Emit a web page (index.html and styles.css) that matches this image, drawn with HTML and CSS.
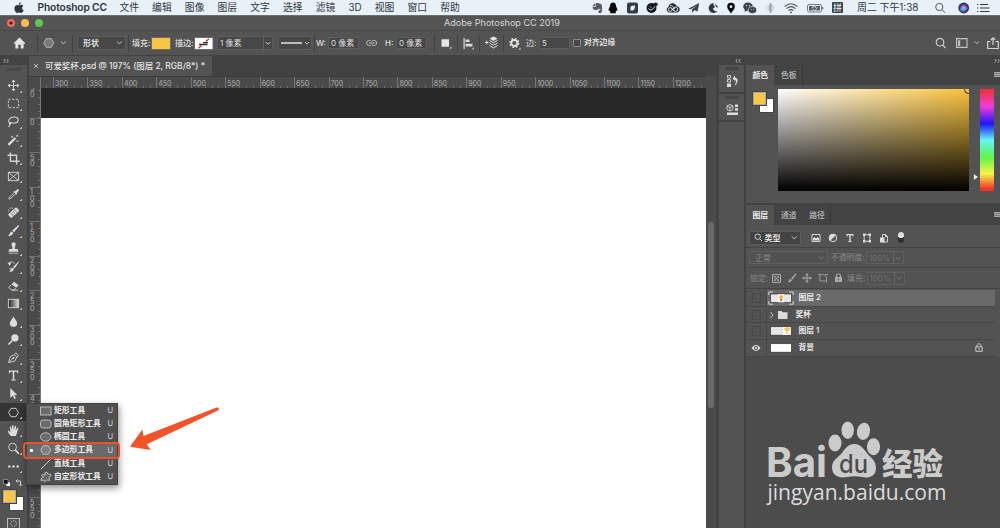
FILE: index.html
```html
<!DOCTYPE html>
<html lang="zh-CN">
<head>
<meta charset="utf-8">
<title>Adobe Photoshop CC 2019</title>
<link rel="stylesheet" href="styles.css">
</head>
<body>
<div class="screen">
  <header class="menubar">
    <nav class="menus">
      <svg class="apple" width="10" height="12" viewBox="0 0 10 12"><path d="M6.9 0.3C6.9 1.6 5.9 2.7 4.8 2.7C4.7 1.5 5.8 0.5 6.9 0.3ZM5 3.3C5.600 3.300 6.200 2.800 7.100 2.800C8 2.800 8.800 3.300 9.200 3.900C7.500 5 7.800 7.500 9.600 8.200C9.200 9.300 8.300 11 7.200 11C6.400 11 6.100 10.500 5.200 10.500C4.300 10.500 3.900 11 3.200 11C1.800 11 0.400 8.600 0.400 6.500C0.400 4.300 1.700 3 3.100 3C3.900 3 4.400 3.300 5 3.300Z"/></svg>
      <b class="appname">Photoshop CC</b>
      <span>文件</span><span>编辑</span><span>图像</span><span>图层</span><span>文字</span><span>选择</span><span>滤镜</span><span>3D</span><span>视图</span><span>窗口</span><span>帮助</span>
    </nav>
    <div class="status">
      <svg width="11" height="12" viewBox="0 0 11 12"><path fill="#555b62" d="M0.400 4L3 1.200V4ZM3.700 1H6.500L7.200 1.700L9.300 2.100C10.400 4.500 10.300 8.500 9.600 10.200C8.800 11.600 6.300 11.400 6.300 9.700C6.300 8.500 7.300 8.200 8.300 8.300V7.300C6.900 7.200 6.500 6.600 6.200 6.800C5.800 8.200 5 8 3.500 8C1.200 8 0.700 6.500 0.500 4.700H3.700Z"/></svg>
      <svg width="11" height="12" viewBox="0 0 11 12"><path fill="#0a0a0a" d="M5 0.500C7 0.500 8 2 8 4.500C9 6 9.600 7.500 9.300 8.800C8.900 9.200 8.500 8.500 8.300 8.200C8.200 9 8 9.500 7.500 10C8.500 10.600 8 11.300 6.800 11.300H3.200C2 11.300 1.500 10.600 2.500 10C2 9.500 1.800 9 1.700 8.200C1.500 8.500 1.100 9.200 0.700 8.800C0.400 7.500 1 6 2 4.500C2 2 3 0.500 5 0.500Z"/></svg>
      <svg width="11" height="12" viewBox="0 0 11 12"><rect y="0.500" width="11" height="11" rx="2" fill="#343b43"/><path fill="#e7eff8" d="M3.500 8.500V5.500C3.500 4 5 3.300 8 3.500C8 7 7 8.500 5.500 8.500Z"/></svg>
      <svg width="12" height="12" viewBox="0 0 12 12"><circle cx="5.500" cy="6" r="5" fill="#15191d"/><circle cx="9.700" cy="2.300" r="1.900" fill="#15191d"/><path stroke="#e7eff8" fill="none" d="M2.500 6.500C4 9 7 8 8.800 4.500M4 4.500L5 5.500"/></svg>
      <svg width="14" height="12" viewBox="0 0 14 12"><path fill="#252b31" d="M4 10.500C0.500 10.500-0.500 6 2.500 5C3 0.500 9 0 10.500 4C15 4.500 14.500 10.500 10.500 10.500Z"/><g fill="none" stroke="#e7eff8" stroke-width="0.900"><circle cx="4.300" cy="7.500" r="1.900"/><circle cx="9.500" cy="7.200" r="2.200"/><path d="M4 3.700C6 3 7.500 5 9 7M5.500 6L8 9"/></g></svg>
      <svg width="12" height="12" viewBox="0 0 12 12"><path fill="#3a4148" d="M0.200 6.800L11.200 1L9.500 9.500L6.300 8L4.500 11L3.900 7.400L9 3.200L2.800 7.300Z"/></svg>
      <svg width="11" height="12" viewBox="0 0 11 12"><path fill="#30363d" d="M5.500 1A5 5 0 1 0 9.500 9.300C7.500 9.500 5.500 8.500 5 6.700L7 5L5.700 3Z"/><path fill="#30363d" d="M7 1.500L10.500 5.500L8 5Z"/></svg>
      <svg width="9" height="12" viewBox="0 0 9 12"><path fill="#080808" fill-rule="evenodd" d="M4 0.800A3.800 3.800 0 0 1 7.800 4.700C7.800 7 5.500 9 4 11.500C2.500 9 0.200 7 0.200 4.700A3.800 3.800 0 0 1 4 0.800ZM4 3.300A1.400 1.400 0 1 0 4 6.100A1.400 1.400 0 0 0 4 3.300Z"/></svg>
      <svg width="14" height="12" viewBox="0 0 14 12"><g fill="#3b424a"><ellipse cx="5" cy="4.600" rx="4.800" ry="4"/><path d="M2 7L1.500 10L4.500 8.300Z"/><ellipse cx="9.400" cy="8" rx="4.200" ry="3.400" stroke="#e7eff8" stroke-width="0.600"/></g><g fill="#e7eff8"><circle cx="3.500" cy="3.700" r="0.600"/><circle cx="6.500" cy="3.700" r="0.600"/><circle cx="8.200" cy="7.200" r="0.500"/><circle cx="10.700" cy="7.200" r="0.500"/></g></svg>
      <svg width="9" height="12" viewBox="0 0 9 12"><path stroke="#7d858e" stroke-width="0.900" fill="none" d="M2 3.500L6.200 8L4.200 10.500V1.500L6.200 4L2 8.500M0 6H1.200M6.800 6H8"/></svg>
      <svg width="14" height="12" viewBox="0 0 14 12"><g fill="none" stroke="#4a5159" stroke-width="1.100"><path d="M0.600 4.600Q7-1.200 13.400 4.600M2.600 6.700Q7 2.600 11.400 6.700M4.600 8.700Q7 6.500 9.400 8.700"/></g><circle cx="7" cy="10.400" r="0.900" fill="#4a5159"/></svg>
      <svg width="17" height="12" viewBox="0 0 17 12"><rect x="0.500" y="2.500" width="14" height="7.500" rx="1.500" fill="none" stroke="#737a82"/><path fill="#525960" d="M2 4H6L4.500 7H6V8.500H2ZM9 4H13V8.500H8.500L11 5.500H9ZM15.200 5H16.200V7.500H15.200ZM8.700 3L4.800 6.900H7L6.300 9.700L10.200 5.700H8Z"/></svg>
      <span class="ime">拼</span>
      <span class="clock">周二 下午1:38</span>
      <svg width="11" height="12" viewBox="0 0 11 12"><g fill="none" stroke="#555c64"><circle cx="4.300" cy="5" r="3.600"/><path d="M7 7.700L10 10.800"/></g></svg>
      <svg width="12" height="12" viewBox="0 0 12 12"><defs><radialGradient id="siri"><stop offset="0" stop-color="#f4f4ff"/><stop offset=".25" stop-color="#8fa2ff"/><stop offset=".55" stop-color="#7b3b9d"/><stop offset="1" stop-color="#20273e"/></radialGradient></defs><circle cx="5.700" cy="6" r="5.400" fill="url(#siri)"/><path d="M1.500 7Q6 4 10 6Q7 8 5 10Q2.500 9.500 1.500 7Z" fill="#35b9df" opacity=".65"/></svg>
      <svg width="13" height="12" viewBox="0 0 13 12"><path stroke="#30373e" stroke-width="1.200" d="M0 2.500H1.200M0 6H1.200M0 9.500H1.200M3 2.500H11M3 6H12.500M3 9.500H12.500"/></svg>
    </div>
  </header>

  <div class="titlebar"><i class="light red"></i><i class="light yellow"></i><i class="light green"></i><span class="title">Adobe Photoshop CC 2019</span></div>

  <div class="options">
    <svg width="13" height="12" viewBox="0 0 13 12"><path fill="#e4e4e4" d="M6.500 0.500L0.700 6.200L1.500 7L2.400 6.500V11.500H5.300V7.700H7.700V11.500H10.600V6.500L11.500 7L12.300 6.200Z"/></svg>
    <i class="rule"></i>
    <svg width="12" height="12" viewBox="0 0 12 12"><path fill="#777" stroke="#b5b5b5" d="M3.300 1.700H8.300L10.700 6L8.300 10.300H3.300L0.800 6Z"/></svg>
    <svg width="7" height="6" viewBox="0 0 7 6"><path class="chev" d="M1 1.500L3.300 4L5.600 1.500"/></svg>
    <i class="rule"></i>
    <div class="field shape"><span>形状</span><svg width="7" height="6" viewBox="0 0 7 6"><path class="chev" d="M1 1.500L3.300 4L5.600 1.500"/></svg></div>
    <i class="rule"></i>
    <span>填充:</span>
    <i class="fillbox"></i>
    <span>描边:</span>
    <svg width="20" height="13" viewBox="0 0 20 13"><rect x="0.500" y="0.500" width="18.500" height="12" fill="#fff" stroke="#6c6c6c"/><path stroke="#e12222" stroke-width="1.300" d="M4.500 11.200L7.500 8.500M12 4.500L15 1.700"/><path stroke="#333" stroke-width="1.300" d="M5 7.500H13.500M9 5.700H14"/></svg>
    <div class="field split"><span>1 像素</span><svg width="9" height="12" viewBox="0 0 9 12"><path stroke="#606060" d="M0.500 0V12"/><path class="chev" d="M3 5L5.200 7.400L7.400 5"/></svg></div>
    <div class="field line"><svg width="30" height="12" viewBox="0 0 30 12"><path stroke="#f0f0f0" stroke-width="1.400" d="M1 6H22"/><path class="chev" d="M25 5L27 7.200L29 5"/></svg></div>
    <i class="rule"></i>
    <span>W:</span>
    <div class="field num">0 像素</div>
    <svg width="12" height="8" viewBox="0 0 12 8"><g fill="none" stroke="#c4c4c4"><path d="M5.300 2.200C4.500 1 0.700 1 0.700 4S4.500 7 5.300 5.800M6 2.200C7 1 10.500 1 10.500 4S7 7 6 5.800M3 4H8.500"/></g></svg>
    <span>H:</span>
    <div class="field num">0 像素</div>
    <i class="rule"></i>
    <svg width="12" height="12" viewBox="0 0 12 12"><path fill="#e5e5e5" d="M0.500 2.200H8V9.700H0.500ZM8.500 11.500H10.500V9.500Z"/></svg>
    <i class="rule"></i>
    <svg width="12" height="13" viewBox="0 0 12 13"><path fill="#d8d8d8" d="M0.500 1H1.700V12H0.500ZM2.500 2.500H6.500V5H2.500ZM2.500 6.700H9.500V9.500H2.500ZM8.800 12.300H10.800V10.300Z"/></svg>
    <i class="rule"></i>
    <svg width="14" height="14" viewBox="0 0 14 14"><path fill="#e2e2e2" d="M8.500 0.500L12.500 2.500L8.500 5L4.500 2.500ZM0 6H3.500V7H0ZM1.300 4.700H2.300V8.300H1.300Z"/><path fill="none" stroke="#ddd" d="M4.500 4.500L8.500 6.700L12.500 4.500M4.500 7L8.500 9.200L12.500 7M4.500 9.500L8.500 12L12.500 9.500"/></svg>
    <i class="rule"></i>
    <svg width="13" height="13" viewBox="0 0 13 13"><circle cx="5.300" cy="6" r="3" fill="none" stroke="#e0e0e0" stroke-width="1.800"/><circle cx="5.300" cy="6" r="4.300" fill="none" stroke="#e0e0e0" stroke-width="1.600" stroke-dasharray="1.700 1.680"/><path fill="#ddd" d="M9.500 12.500H11.500V10.500Z"/></svg>
    <span class="soft">边:</span>
    <div class="field num">5</div>
    <i class="check"></i>
    <span class="strong">对齐边缘</span>
    <svg width="12" height="12" viewBox="0 0 12 12"><g fill="none" stroke="#ccc" stroke-width="1.200"><circle cx="5" cy="5.200" r="3.800"/><path d="M7.700 8L10.500 11"/></g></svg>
    <svg width="13" height="12" viewBox="0 0 13 12"><path fill="none" stroke="#c4c4c4" stroke-width="1.100" d="M0.600 1.600H11V10.400H0.600Z"/><path fill="#bbb" d="M2 3.200H4.200V9H2Z"/></svg>
    <svg width="7" height="6" viewBox="0 0 7 6"><path class="chev" d="M0.800 1.500L2.800 3.700L4.800 1.500"/></svg>
    <svg width="13" height="13" viewBox="0 0 13 13"><path fill="none" stroke="#d0d0d0" stroke-width="1.200" d="M3.500 4.500H0.700V11.500H11.300V4.500H8.500M6 8V1M3.700 3L6 0.900L8.300 3"/></svg>
  </div>

  <div class="work">
    <aside class="tools">
      <div class="strip">››</div>
      <div class="grip"></div>
      <div class="tool"><svg viewBox="0 0 14 14"><path class="s" d="M7 2V12M2 7H12"/><path class="f" d="M7 0.700L9.200 3.200H4.800ZM7 13.300L9.200 10.800H4.800ZM0.700 7L3.200 4.800V9.200ZM13.300 7L10.800 4.800V9.200Z"/></svg></div>
      <div class="tool"><svg viewBox="0 0 14 14"><rect class="s" x="1.500" y="2.500" width="11" height="9" stroke-dasharray="2.500 1.500"/></svg></div>
      <div class="tool"><svg viewBox="0 0 14 14"><path class="s" stroke-width="1.200" d="M3 8.300C0 6.500 3 2.200 7.500 2.200C14 2.200 13.500 8.500 7.500 8.700C5.500 8.700 4 7.500 3 8.300C1.500 9.500 3.500 10.500 4 9.500C4.500 8.300 3 8 3 10.500C3 12 2 12.500 1.500 12.800"/></svg></div>
      <div class="tool"><svg viewBox="0 0 14 14"><path stroke="#ddd" stroke-width="2.400" d="M1.500 12.800L9 5.300"/><path class="s" d="M4.500 3L6.500 5M6.500 3L4.500 5M10 2L12 4M12 2L10 4M10.500 8L12 9.500M12 8L10.500 9.500"/></svg></div>
      <div class="tool"><svg viewBox="0 0 14 14"><path class="s" stroke-width="1.500" d="M3.700 0.500V10H13.500M0.500 3.500H10.300V13.500"/></svg></div>
      <div class="tool"><svg viewBox="0 0 14 14"><path class="s" d="M1.500 2.500H12.500V11.500H1.500ZM1.500 2.500L12.500 11.500M12.500 2.500L1.500 11.500"/></svg></div>
      <div class="tool"><svg viewBox="0 0 14 14"><path class="s" d="M8 4.500L3 9.700L2 12L4.300 11L9.500 6"/><path class="f" d="M7 4L8 3L9 3.700C9.500 2.500 11.500 0.500 12.500 1.500S11.500 4.500 10.300 5.200L11 6.200L10 7.200Z"/></svg></div>
      <div class="tool"><svg viewBox="0 0 14 14"><g transform="rotate(-42 7 7)"><rect class="f" x="1" y="4.500" width="12" height="5.500" rx="1.500"/><path stroke="#666" stroke-width=".8" d="M4.300 4.500V10M9.700 4.500V10M6 6.200H8M6 8.200H8"/></g><path class="s" stroke-dasharray="1.200 1" d="M1.500 6C1 3.500 4 1 6.500 2.500"/></svg></div>
      <div class="tool"><svg viewBox="0 0 14 14"><path class="f" d="M12.300 1L13.200 1.900L7.700 9L5.500 7.300ZM5 8L7 9.800C5.500 12.700 3 13 1 12.700C3 11.500 3 8.500 5 8Z"/></svg></div>
      <div class="tool"><svg viewBox="0 0 14 14"><path class="f" d="M5 3.500A2.300 2.300 0 1 1 9.200 3.500C8.500 5 8.300 6 8.500 7.500H11.500L12.500 10.500H1.500L2.500 7.500H5.700C6 6 5.700 5 5 3.500ZM2 11.500H12V12.500H2Z"/></svg></div>
      <div class="tool"><svg viewBox="0 0 14 14"><path class="f" d="M12.500 1.500L13 2L8.500 9L6.500 7.500ZM6 8L7.700 9.600C6.500 12.500 4 12.800 2.300 12.500C4 11.500 4 8.500 6 8ZM0.500 3L3 6.500L4.500 3Z"/><path class="s" d="M2 3.500C4 1 7 2 8 4M2.500 9L4.500 10"/></svg></div>
      <div class="tool"><svg viewBox="0 0 14 14"><path class="f" d="M7.500 3L12.500 6.700L10 9.500L5 5.800Z"/><path class="s" d="M4.500 6.200L1.800 9.200L5 11.800H7.500L9.500 9.800M5 12H12"/></svg></div>
      <div class="tool"><svg viewBox="0 0 14 14"><defs><linearGradient id="gr"><stop stop-color="#222"/><stop offset="1" stop-color="#ddd"/></linearGradient></defs><rect x="1.500" y="2.500" width="11" height="9" fill="url(#gr)" stroke="#d0d0d0"/></svg></div>
      <div class="tool"><svg viewBox="0 0 14 14"><path class="f" d="M7 1.500C8.500 4.500 11 6.500 11 9A4 3.800 0 0 1 3 9C3 6.500 5.500 4.500 7 1.500Z"/></svg></div>
      <div class="tool"><svg viewBox="0 0 14 14"><circle class="f" cx="8.500" cy="5.300" r="3.900"/><path stroke="#ddd" stroke-width="1.600" d="M5.500 8.300L1.500 12.500"/></svg></div>
      <div class="tool"><svg viewBox="0 0 14 14"><path class="s" d="M1.800 12.500L3.500 6L8 4L10.500 6.500L8.500 10.800ZM2 12.300L6.500 7.800M8 3.500L9.500 2L12.500 5L11 6.500"/><circle class="f" cx="7" cy="7.500" r="1"/></svg></div>
      <div class="tool"><svg viewBox="0 0 14 14"><path class="f" d="M2 1.500H12V4.500H11L10.500 2.900H7.800V11.300L9.500 11.700V12.500H4.500V11.700L6.200 11.300V2.900H3.500L3 4.500H2Z"/></svg></div>
      <div class="tool"><svg viewBox="0 0 14 14"><path class="f" d="M3.500 1L11 8.500L7.800 8.600L9.700 12L8 12.900L6.200 9.400L3.500 11.500Z"/></svg></div>
      <div class="tool on"><svg viewBox="0 0 14 14"><path class="s" d="M4.300 2.500H9.700L12.300 7L9.700 11.500H4.300L1.700 7Z"/></svg></div>
      <div class="tool"><svg viewBox="0 0 14 14"><path class="f" d="M3.500 12.500L1 8.500C0.500 7.500 1.800 7 2.500 7.800L3.800 9L3 3.500C3 2.500 4.200 2.500 4.500 3.400L5.300 6.500L5.500 1.900C5.600 0.900 6.900 0.900 7 1.900L7.300 6.300L8.500 2.300C8.800 1.400 10 1.700 9.900 2.700L9.300 7L10.700 4.500C11.200 3.800 12.300 4.300 12 5.200L10.500 10.500L9.500 13H4Z"/></svg></div>
      <div class="tool"><svg viewBox="0 0 14 14"><circle class="s" cx="6" cy="5.500" r="4.200"/><path stroke="#ddd" stroke-width="1.800" d="M9 8.700L12.800 12.700"/></svg></div>
      <div class="tool"><svg viewBox="0 0 14 14"><g class="f"><circle cx="2.500" cy="7" r="1.300"/><circle cx="7" cy="7" r="1.300"/><circle cx="11.500" cy="7" r="1.300"/></g></svg></div>
      <div class="minis"><svg width="8" height="8" viewBox="0 0 8 8"><path fill="#fff" stroke="#222" stroke-width=".6" d="M3 3H7.500V7.500H3Z"/><path fill="#111" stroke="#bbb" stroke-width=".6" d="M0.500 0.500H5V5H0.500Z"/></svg><svg width="8" height="8" viewBox="0 0 8 8"><path fill="none" stroke="#d0d0d0" d="M2.500 0.500L1 2L2.500 3.500M1 2H5.500V6.500M4 5.500L5.500 7L7 5.500"/></svg></div>
      <div class="swatches"><i class="bg"></i><i class="fg"></i></div>
      <svg class="mask" width="13" height="10" viewBox="0 0 13 10"><rect x="0.500" y="0.500" width="12" height="10" fill="none" stroke="#bbb"/><circle cx="6.500" cy="5.500" r="2.800" fill="none" stroke="#bbb" stroke-dasharray="1.500 1"/></svg>
    </aside>

    <main class="doc">
      <div class="tabs"><div class="tab"><svg width="6" height="6" viewBox="0 0 6 6"><path stroke="#bbb" d="M1 1L5 5M5 1L1 5"/></svg><span class="filename">可爱奖杯.psd @ 197% (图层 2, RGB/8*) *</span></div></div>
      <div class="hruler"><i class="corner"></i><div class="hticks"><span>300</span><span>350</span><span>400</span><span>450</span><span>500</span><span>550</span><span>600</span><span>650</span><span>700</span><span>750</span><span>800</span><span>850</span><span>900</span><span>950</span><span>1000</span><span>1050</span><span>1100</span><span>1150</span><span>1200</span></div></div>
      <div class="stage">
        <div class="vruler"><div class="vticks"><span>50</span><span>0</span><span>50</span><span>100</span><span>150</span><span>200</span><span>250</span><span>300</span><span>350</span><span>400</span><span>450</span><span>500</span><span>550</span></div></div>
        <div class="canvas"></div>
      </div>
    </main>
    <div class="scroll"><i class="thumb"></i></div>

    <div class="side">
      <div class="strip sidestrip"><span>‹‹</span><span>››</span></div>
      <div class="sidebody">
        <div class="dock">
          <div class="dockitem"><svg width="13" height="14" viewBox="0 0 13 14"><path fill="none" stroke="#ccc" d="M1.500 1.500H4.500V4H1.500ZM1.500 5.500H4.500V8H1.500Z"/><path fill="#ddd" d="M1 9.500H5V13H1ZM6.500 4.500L9 1.500V3.500C12.500 4 12.500 9 8.500 12C10 9 10.500 6.500 9 5.800V7Z"/></svg></div>
          <div class="dockitem"><svg width="13" height="14" viewBox="0 0 13 14"><path fill="none" stroke="#ccc" d="M4 1.500L7 3V6.500L4 8L1 6.500V3ZM1 3L4 4.500L7 3M4 4.500V8"/><path fill="#ddd" d="M9 1.500H12V4H9ZM9 5.200H12V7.800H9ZM1 9.500H12V12H1Z"/></svg></div>
        </div>
        <div class="panels">
          <div class="ptabs colortabs"><b class="active">颜色</b><b>色板</b><i class="pmenu"></i></div>
          <div class="color">
            <div class="swatches small"><i class="bg"></i><i class="fg"></i></div>
            <div class="spectrum"><i class="pick"></i></div>
            <svg class="pointer" width="6" height="8" viewBox="0 0 6 8"><path fill="#eee" stroke="#333" stroke-width=".5" d="M0.500 0.500L5.500 4L0.500 7.500Z"/></svg>
            <div class="hue"></div>
          </div>
          <div class="ptabs"><b class="active">图层</b><b>通道</b><b>路径</b><i class="pmenu"></i></div>
          <div class="filter">
            <div class="field kind"><svg width="9" height="9" viewBox="0 0 9 9"><g fill="none" stroke="#ccc"><circle cx="3.700" cy="3.700" r="2.700"/><path d="M5.800 5.800L8 8"/></g></svg><span>类型</span><svg width="7" height="6" viewBox="0 0 7 6"><path class="chev" d="M1 1.500L3.300 4L5.600 1.500"/></svg></div>
            <svg width="10" height="10" viewBox="0 0 10 10"><path class="s" d="M1 1.500H9V8.500H1Z"/><path class="f" d="M2 7.500V5.500L3.500 4L5 5.500L6.500 4L8 5.500V7.500Z"/></svg>
            <svg width="10" height="10" viewBox="0 0 10 10"><circle cx="5" cy="5" r="3.700" fill="#555" stroke="#ddd"/><path class="f" d="M8 2A4 4 0 0 0 2 8Z"/></svg>
            <svg width="10" height="10" viewBox="0 0 10 10"><path class="f" d="M1.500 1H8.500V3.500H7.700L7.200 2.200H5.700V8L6.800 8.300V9H3.200V8.300L4.300 8V2.200H2.800L2.300 3.500H1.500Z"/></svg>
            <svg width="10" height="10" viewBox="0 0 10 10"><path class="s" d="M2.200 1.700H7.800V8.300H2.200Z"/><path class="f" d="M1 0.500H3.400V2.900H1ZM6.600 0.500H9V2.900H6.600ZM1 7.100H3.400V9.500H1ZM6.600 7.100H9V9.500H6.600Z"/></svg>
            <svg width="10" height="10" viewBox="0 0 10 10"><path class="s" d="M3.500 1.500H6.500L8.500 3.500V9H3.500Z"/><path class="f" d="M1 4.500H5.500V9.500H1ZM6 1.200V4H8.800Z"/></svg>
            <i class="switch"></i>
          </div>
          <div class="blend"><div class="field dis mode"><span>正常</span><svg width="7" height="6" viewBox="0 0 7 6"><path class="chev" d="M1 1.500L3.300 4L5.600 1.500"/></svg></div><span class="oplabel">不透明度:</span><div class="field dis pct"><span>100%</span><svg width="10" height="12" viewBox="0 0 10 12"><path stroke="#666" d="M0.500 0V12"/><path class="chev" d="M3 5L5.200 7.400L7.400 5"/></svg></div></div>
          <div class="lock"><span>锁定:</span>
            <svg width="9" height="9" viewBox="0 0 9 9"><path fill="none" stroke="#aaa" d="M0.500 0.500H8.500V8.500H0.500Z"/><path fill="#aaa" d="M2 2H3.700V3.700H2ZM5.300 2H7V3.700H5.300ZM3.700 3.700H5.300V5.300H3.700ZM2 5.300H3.700V7H2ZM5.300 5.300H7V7H5.300Z"/></svg>
            <svg width="10" height="10" viewBox="0 0 14 14"><path fill="#aaa" d="M12.500 0.500L13.500 1.500L7.700 9L5.700 7.500ZM5 8L7 10C5.500 13 3 13.300 1 13C3 11.500 3 8.500 5 8Z"/></svg>
            <svg width="10" height="10" viewBox="0 0 14 14"><path stroke="#aaa" stroke-width="1.400" d="M7 2V12M2 7H12"/><path fill="#aaa" d="M7 0L9.500 3.200H4.500ZM7 14L9.500 10.800H4.500ZM0 7L3.200 4.500V9.500ZM14 7L10.800 4.500V9.500Z"/></svg>
            <svg width="11" height="10" viewBox="0 0 11 10"><path fill="none" stroke="#999" d="M2 0.500V8H8.500V4.500M0 1.700H6L8.500 4V9.500M7 1.500H10"/></svg>
            <svg width="9" height="10" viewBox="0 0 9 10"><path fill="#aaa" fill-rule="evenodd" d="M1 4H8V9H1ZM4 5.500V7.500H5V5.500Z"/><path fill="none" stroke="#aaa" stroke-width="1.200" d="M2.500 4V2.500C2.500 0.500 6.500 0.500 6.500 2.500V4"/></svg>
            <span>填充:</span><div class="field dis pct"><span>100%</span><svg width="10" height="12" viewBox="0 0 10 12"><path stroke="#666" d="M0.500 0V12"/><path class="chev" d="M3 5L5.200 7.400L7.400 5"/></svg></div></div>
          <div class="layers">
            <div class="layer sel"><div class="eye"><i></i></div><svg class="thumbimg" width="26" height="14" viewBox="0 0 26 14"><defs><pattern id="chk" width="3" height="3" patternUnits="userSpaceOnUse"><rect width="3" height="3" fill="#fff"/><path fill="#d0d0d0" d="M0 0H1.500V1.500H0ZM1.500 1.500H3V3H1.500Z"/></pattern></defs><rect x="2.500" y="3" width="21" height="8.500" fill="url(#chk)" stroke="#333" stroke-width=".7"/><path fill="#fff" d="M10 3.300H16V11.300H10Z"/><path fill="#f7b733" d="M11.200 5C12 3.500 14.300 3.500 15 5C15.500 7 14.500 8 13 8.500C11.500 8 10.700 7 11.200 5Z"/><path fill="#e85c38" d="M12 8H14V10H12Z"/><path class="s" d="M0.800 4V1H5M21 1H25.200V4M25.200 10V13.200H21M5 13.200H0.800V10"/></svg><b>图层 2</b></div>
            <div class="layer group"><div class="eye"><i></i></div><svg class="thumbimg" width="20" height="12" viewBox="0 0 20 12"><path class="chev" d="M1.500 3L4 6L1.500 9"/><path class="f" d="M9 2H12.500L13.500 3.200H18.500V10H9Z"/></svg><b>奖杯</b></div>
            <div class="layer"><div class="eye"><i></i></div><svg class="thumbimg" width="26" height="14" viewBox="0 0 26 14"><rect x="2.500" y="2.700" width="21" height="8.500" fill="url(#chk)" stroke="#333" stroke-width=".7"/><path fill="#fff" d="M15 3H22V11H15Z"/><path fill="#f4c64e" d="M16.500 4C18 3 20.500 3 22 4.500C22 6 21 7.500 19.700 7.500V10H18.300V7.500L16.500 6Z"/></svg><b>图层 1</b></div>
            <div class="layer"><div class="eye"><svg width="10" height="8" viewBox="0 0 10 8"><path fill="#e5e5e5" fill-rule="evenodd" d="M0.500 4Q5-1.800 9.500 4Q5 9.800 0.500 4ZM5 1.900A2.100 2.100 0 1 0 5 6.100A2.100 2.100 0 0 0 5 1.900Z"/><circle cx="5" cy="4" r="1.100" fill="#ddd"/></svg></div><svg class="thumbimg" width="26" height="14" viewBox="0 0 26 14"><rect x="2.500" y="2.700" width="21" height="8.500" fill="#fff" stroke="#333" stroke-width=".7"/></svg><b>背景</b><svg class="padlock" width="8" height="9" viewBox="0 0 8 9"><path fill="none" stroke="#ccc" d="M0.800 3.800H7.200V8.300H0.800ZM2 3.800V2.500C2 0.200 6 0.200 6 2.500V3.800M4 5.200V7"/></svg></div>
          </div>
          <div class="empty">
            <svg class="wm" width="192" height="100" viewBox="0 0 192 100">
              <g fill="#cbcbcb"><text class="bai" x="10" y="61.500" textLength="61" lengthAdjust="spacingAndGlyphs">Bai</text>
              <ellipse cx="79" cy="28" rx="6.500" ry="8.500"/><ellipse cx="91.700" cy="15.200" rx="6.200" ry="8.700"/><ellipse cx="107.500" cy="16.300" rx="6.500" ry="8.700" transform="rotate(10 107.500 16.300)"/><ellipse cx="117.500" cy="31.700" rx="6.600" ry="8.500"/>
              <path d="M98.500 29C105 29 108 34.500 112 39.500C117 44 120 47 120 53C120 62 112 63.500 106 62Q98 60.500 91 62C83 63.500 76 61 76 52C76 46 81 43 85.500 38.500C89 34 92 29 98.500 29Z"/>
              <text class="jy" x="126" y="59.500" textLength="61" lengthAdjust="spacingAndGlyphs">经验</text></g>
              <text class="du" x="83" y="57.500" textLength="29" lengthAdjust="spacingAndGlyphs">du</text>
              <text class="url" x="11.500" y="84.500" textLength="179" lengthAdjust="spacingAndGlyphs">jingyan.baidu.com</text>
            </svg>
          </div>
        </div>
      </div>
    </div>
  </div>

  <div class="flyout">
    <div class="row"><i></i><svg viewBox="0 0 12 12"><rect x="0.500" y="2" width="10.500" height="8" fill="#6b6b6b" stroke="#bbb"/></svg><b>矩形工具</b><em>U</em></div>
    <div class="row"><i></i><svg viewBox="0 0 12 12"><rect x="0.500" y="2" width="10.500" height="8" rx="2.500" fill="#6b6b6b" stroke="#bbb"/></svg><b>圆角矩形工具</b><em>U</em></div>
    <div class="row"><i></i><svg viewBox="0 0 12 12"><ellipse cx="5.700" cy="6" rx="5.200" ry="4.200" fill="#6b6b6b" stroke="#bbb"/></svg><b>椭圆工具</b><em>U</em></div>
    <div class="row cur"><i class="dot"></i><svg viewBox="0 0 12 12"><path fill="#808080" stroke="#bbb" d="M3.200 1.700H8.300L10.800 6L8.300 10.300H3.200L0.700 6Z"/></svg><b>多边形工具</b><em>U</em></div>
    <div class="row"><i></i><svg viewBox="0 0 12 12"><path stroke="#ccc" d="M1 11L10.500 1.500"/></svg><b>直线工具</b><em>U</em></div>
    <div class="row"><i></i><svg viewBox="0 0 12 12"><path fill="#666" stroke="#bbb" d="M5 1.500L7 1.200L7.500 3L10.500 3.200L11 5L9 6.500L9.500 9.500L7 8.800L4.500 10.800L3.500 9L1 9.500L1.200 7.500L3.500 6L1.500 4.500L2.500 3.300L5 4Z"/></svg><b>自定形状工具</b><em>U</em></div>
  </div>
  <div class="highlight"></div>
  <svg class="arrow" width="92" height="46" viewBox="0 0 92 46"><path fill="#f15428" d="M2 41.700L14.300 24.500L15.500 31L88.500 2.500Q90.500 2 91 3.800Q91 5 89.500 5.800L18.800 39.300L22.800 45Z"/></svg>
</div>
</body>
</html>
```

FILE: styles.css
```css
* { box-sizing: border-box; }
body { margin: 0; font-family: Inter, "Noto Sans CJK SC", sans-serif; font-size: 8px; line-height: 1; color: #dedede; }
i, em { font-style: normal; }
svg { display: block; flex: none; }
.s { fill: none; stroke: #d2d2d2; }
.f { fill: #dcdcdc; }
.chev { fill: none; stroke: #c4c4c4; stroke-width: 1; }
.screen { position: relative; width: 1000px; height: 528px; overflow: hidden; display: flex; flex-direction: column; background: #535353; white-space: nowrap; }

.menubar { height: 15px; flex: none; display: flex; align-items: center; justify-content: space-between; background: #e8f0f8; color: #30363d; font-size: 9.800px; }
.menus { display: flex; align-items: center; gap: 13.150px; padding-left: 14.300px; }
.apple { fill: #30363d; }
.appname { font-size: 10.200px; width: 68.800px; letter-spacing: -0.100px; font-weight: 600; }
.status { width: 408px; display: grid; align-items: center; grid-template-columns: 16px 19px 19px 20px 22px 20px 19px 16px 23px 18px 23px 25px 25px 78px 23px 19px 23px; }
.ime { width: 11px; height: 11px; border-radius: 1px; background: #3b4249; color: #f1f5fa; font-size: 9px; line-height: 11px; text-align: center; }
.clock { font-size: 9.900px; }

.titlebar { height: 16px; flex: none; display: flex; align-items: center; gap: 6px; padding-left: 6.500px; background: #545454; border-top: 1px solid #6c6f72; border-bottom: 1px solid #484848; }
.light { width: 8px; height: 8px; border-radius: 50%; }
.red { background: radial-gradient(circle, #5a100c 1.200px, #ee6a5f 1.900px); }
.yellow { background: #f5bd4f; }
.green { background: #61c454; }
.title { margin-left: 395.500px; font-size: 9.100px; color: #d6d6d6; }

.options { height: 25px; flex: none; display: grid; align-items: center; padding-left: 13px; font-weight: 500; background: #535353; border-bottom: 1px solid #424242;
  grid-template-columns: 24px 6px 17px 12px 5px 51px 4px 19px 24px 19px 23px 61px 36px 2px 12px 38px 19px 11px 38px 7px 16px 6px 16px 6px 18px 6px 17px 13px 34px 11px 351px 21px 18px 13px 13px; }
.options > .rule { width: 1px; height: 17px; background: #434343; }
.soft { font-weight: 400; }
.strong { font-weight: 700; font-size: 7.800px; }
.field { height: 14px; display: flex; align-items: center; justify-content: space-between; padding: 0 2px 0 5px; background: #474747; border: 1px solid #5c5c5c; border-radius: 1px; }
.shape { width: 49px; font-weight: 600; }
.split { width: 56px; padding: 0 0 0 2px; font-weight: 400; }
.line { width: 34px; padding: 0 1px; }
.num { width: 31px; height: 12px; padding-left: 2px; font-weight: 400; }
.fillbox { width: 20px; height: 13px; background: #f9c643; border: 1px solid #6c6c6c; }
.check { width: 8px; height: 8px; background: #474747; border: 1px solid #8a8a8a; border-radius: 1px; }

.work { flex: 1; min-height: 0; display: flex; background: #424242; }
.strip { height: 9px; flex: none; background: #434343; color: #b5b5b5; font-size: 8px; line-height: 8px; padding-left: 3px; }
.tools { width: 27px; flex: none; display: flex; flex-direction: column; background: #535353; overflow: hidden; }
.grip { width: 14px; height: 3px; margin: 3px 0 5.500px 7px; flex: none; background: #484848; }
.tool { height: 18.150px; flex: none; display: flex; align-items: center; padding-left: 7px; background: linear-gradient(135deg, transparent 50%, #bcbcbc 50%) no-repeat 20px 14px / 2px 2px; }
.tool svg { width: 13px; height: 13px; }
.tool.on { background-color: #353535; }
.minis { flex: none; display: flex; gap: 4px; padding: 3px 0 0 3px; height: 14.200px; }
.swatches { flex: none; display: grid; width: 20px; height: 20px; margin-left: 3px; }
.swatches i { grid-area: 1 / 1; width: 13px; height: 13px; border: 1px solid #aaa; outline: 1px solid #444; }
.swatches .bg { background: #fff; border-color: #fff; place-self: end; }
.swatches .fg { background: #fac643; }
.mask { margin: 8px 0 0 7px; }

.doc { width: 678px; margin-left: 1px; padding-left: 1px; flex: none; display: flex; flex-direction: column; }
.tabs { height: 20px; flex: none; }
.tab { width: 183px; height: 20px; display: flex; align-items: center; gap: 6px; padding-left: 4px; background: #535353; font-weight: 500; }
.filename { font-size: 8.450px; color: #e5e5e5; }
.hruler { height: 12px; flex: none; display: flex; background: #4a4a4a; border-top: 1px solid #3a3a3a; }
.corner { width: 12px; flex: none; border-right: 1px solid #777; }
.hticks { flex: 1; min-width: 0; overflow: hidden; display: flex; padding-left: 12px; background: repeating-linear-gradient(90deg, #707070 0 1px, transparent 1px 6.890px) -1.700px 100% / 101% 2px no-repeat; }
.hticks span { width: 34.450px; flex: none; border-left: 1px solid #747474; padding: 2.500px 0 0 1px; font-size: 7px; color: #b0b0b0; }
.stage { flex: 1; min-height: 0; display: flex; }
.vruler { width: 12px; flex: none; overflow: hidden; background: #4a4a4a; border-right: 1px solid #777; }
.vticks { margin-top: -5px; background: repeating-linear-gradient(#707070 0 1px, transparent 1px 6.900px) 100% 0 / 2px 100% no-repeat; }
.vticks span { display: block; height: 34.500px; border-top: 1px solid #707070; padding: 1.500px 4px 0 1px; width: 11px; font-size: 7.200px; line-height: 6.600px; color: #b0b0b0; white-space: normal; word-break: break-all; }
.canvas { flex: 1; background: #fff; border-top: 30px solid #282828; }
.scroll { width: 10px; flex: none; margin-top: 20px; padding: 146px 2px 0; background: #4b4b4b; }
.thumb { display: block; height: 186px; border-radius: 3px; background: #6a6a6a; }

.side { flex: 1; min-width: 0; margin-left: 2px; display: flex; flex-direction: column; }
.sidestrip { display: flex; justify-content: space-between; padding: 0 0 0 17px; }
.sidestrip span:last-child { width: 6px; }
.sidebody { flex: 1; min-height: 0; display: flex; gap: 2px; }
.dock { width: 26px; flex: none; background: #535353; border-left: 1px solid #424242; }
.dockitem { height: 28.500px; padding: 9px 0 0 7px; border-bottom: 2px solid #424242; background: linear-gradient(#464646, #464646) 6px 2px / 14px 3px no-repeat; }
.panels { flex: 1; min-width: 0; display: flex; flex-direction: column; background: #535353; }
.ptabs { height: 20px; flex: none; display: flex; background: #434343; color: #b8b8b8; }
.ptabs b { width: 28.400px; padding-left: 6.500px; line-height: 20px; font-size: 7.800px; font-weight: 500; }
.ptabs .active { background: #535353; color: #eee; font-weight: 700; }
.ptabs b:nth-last-child(2) { border-right: 1px solid #383838; }
.pmenu { margin: 7px 0 0 auto; width: 6px; height: 5px; background: repeating-linear-gradient(#aaa 0 1px, #777 1px 2px); }
.color { height: 120px; flex: none; display: flex; padding: 4px 6px 0 7px; border-bottom: 2px solid #424242; }
.small { margin: 3px 5px 0 0; }
.spectrum { width: 191px; height: 102px; overflow: hidden; background: linear-gradient(transparent, #000), linear-gradient(90deg, #fff, #fac23b); position: relative; }
.pick { position: absolute; right: -4px; top: -4px; width: 9px; height: 9px; border: 1px solid #222; border-radius: 50%; }
.pointer { margin: 84px 0 0 4px; }
.hue { width: 14px; height: 102px; margin-left: 1px; background: linear-gradient(#f22f32, #ef3cdc 17%, #1f16f4 34%, #64f5f4 50%, #60f449 67%, #f8f34b 83%, #ef3328 98%); }
.filter { height: 23px; flex: none; display: flex; align-items: center; gap: 7px; padding: 3px 0 0 3px; border-bottom: 1px solid #444; }
.kind { width: 52px; margin-right: 3px; padding: 0 2px 0 4px; font-weight: 600; background: #434343; }
.kind span { margin-right: 9px; }
.switch { width: 6px; height: 11px; margin-left: 2px; border-radius: 3px; background: radial-gradient(circle at 3px 3px, #ddd 3px, #303030 3.500px); }
.blend, .lock { height: 20px; flex: none; display: flex; align-items: center; padding-left: 3px; color: #888; border-bottom: 1px solid #444; }
.dis { background: #515151; border-color: #606060; color: #707070; height: 13px; }
.dis .chev { stroke: #777; }
.mode { width: 79px; color: #888; }
.oplabel { margin: 0 1px 0 3px; width: 34px; font-size: 7.800px; }
.pct { width: 38px; padding: 0 0 0 2px; }
.lock { gap: 5.500px; height: 21px; padding-left: 4px; }
.lock .pct { margin-left: -3px; }
.lock span:first-child { width: 16.500px; }
.lock > span:nth-of-type(2) { margin-left: -1.500px; width: 17px; }
.layers { flex: none; display: flex; flex-direction: column; margin-right: 5px; padding-top: 1.200px; }
.layer { height: 16.600px; display: flex; align-items: center; border-bottom: 1px solid #474747; color: #e8e8e8; }
.sel { background: linear-gradient(90deg, #535353 20px, #6a6a6a 20px); }
.layer b { margin-left: 4.500px; font-weight: 600; font-size: 7.800px; }
.eye { width: 21px; flex: none; height: 100%; display: flex; align-items: center; justify-content: center; border-right: 1px solid #474747; }
.eye i { width: 9px; height: 10px; border: 1px solid #484848; }
.thumbimg { margin-left: 1px; }
.group .thumbimg { margin-left: 2px; }
.group b { margin-left: 6.500px; }
.padlock { margin: 0 12px 0 auto; }
.empty { flex: 1; background: #4c4c4c; padding: 58.500px 0 0 10px; }
.wm text { font-family: Inter, "Noto Sans CJK SC", sans-serif; }
.wm .bai { font-weight: 700; font-size: 41px; }
.wm .jy { font-family: "Noto Sans CJK SC", sans-serif; font-weight: 900; font-size: 31px; }
.wm .du { font-weight: 500; font-size: 25.500px; fill: #4c4c4c; }
.wm .url { font-family: "Open Sans", sans-serif; font-size: 21px; fill: #dcdcdc; }

.flyout { position: absolute; left: 26px; top: 403px; width: 92px; height: 81.500px; padding: 0 0 1px; background: #505050; border: 1px solid #424242; box-shadow: 1px 3px 7px rgba(0,0,0,.45); }
.row { height: 13.250px; display: flex; align-items: center; padding: 0 4px 0 3px; }
.row > i { width: 3px; height: 3px; margin-right: 7px; }
.row > .dot { background: #fff; }
.row svg { width: 12px; height: 12px; margin-right: 2px; }
.row b { font-size: 7.800px; font-weight: 600; color: #ededed; }
.row em { margin-left: auto; font-size: 7.500px; color: #ddd; }
.cur { background: #6a6a6a; }
.highlight { position: absolute; left: 23px; top: 442px; width: 97px; height: 17px; border: 2px solid #ec5229; border-radius: 4px; }
.arrow { position: absolute; left: 128px; top: 405px; }
```
